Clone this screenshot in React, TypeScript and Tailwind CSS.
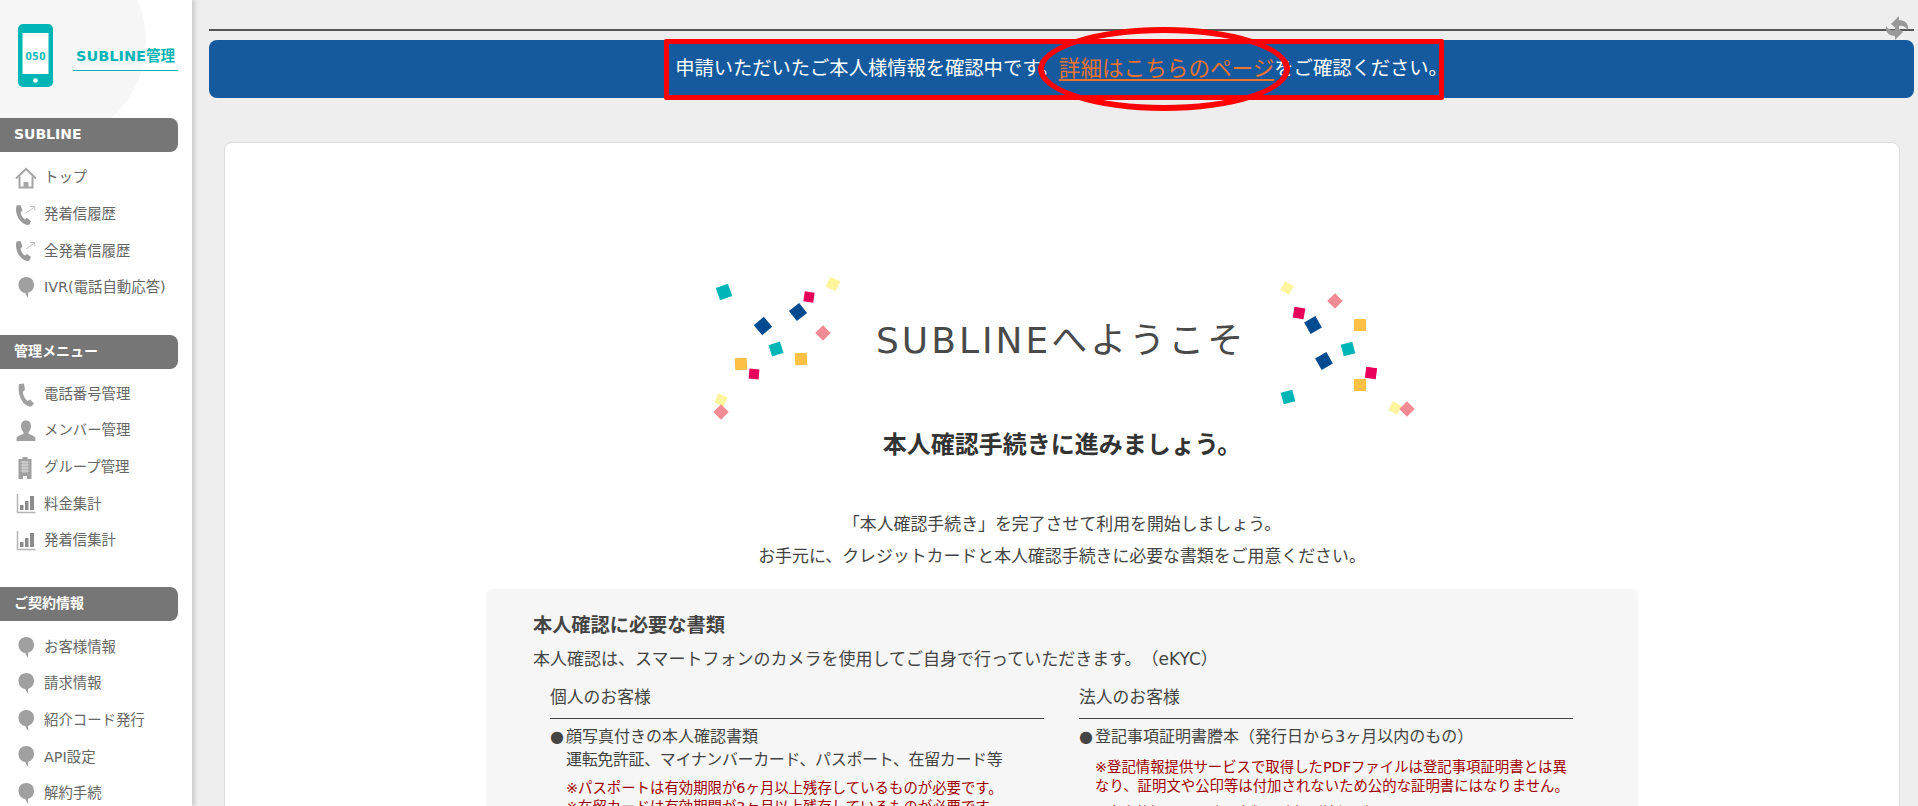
import type { ReactNode } from "react";

const FONT = "font-['DejaVu_Sans','Noto_Sans_CJK_JP',sans-serif]";

function Home() {
  return (
    <svg width="24" height="22" viewBox="0 0 24 22" fill="none" stroke="#a6a6a6" strokeWidth="2">
      <path d="M2 11.500 12 2 22 11.500" />
      <path d="M5.500 9.500V20.500H18.500V9.500" />
      <path d="M9.500 21v-6h5v6Z" fill="#a6a6a6" stroke="none" />
    </svg>
  );
}
function PhoneArrow() {
  return (
    <svg width="24" height="22" viewBox="0 0 24 22" fill="none">
      <path d="M2.500 1.500 6.500 1 8.500 6.500 6.500 8.500C7 11.500 8.500 14 11 15.500L13 14 17 17 15.500 20.500C13 21.500 10 20.500 7 17.500 3.500 14 1 8 2.500 1.500Z" fill="#9a9a9a" />
      <path d="M12 9 20.500 3M16 2.500H20.800V6.500" stroke="#c0c0c0" strokeWidth="1" />
    </svg>
  );
}
function Bubble() {
  return (
    <svg width="24" height="24" viewBox="0 0 24 24">
      <path d="M12.500 1C6.800 1 4.500 5 4.500 9c0 4.500 3.200 7.500 6.700 8 .9 1.800 1.800 3.700 3.300 5-.7-2.200-.6-3.800-.3-5.200C17.500 15.800 20 13 20 9 20 4.800 17.500 1 12.500 1Z" fill="#a0a0a0" />
    </svg>
  );
}
function Phone() {
  return (
    <svg width="24" height="24" viewBox="0 0 24 24">
      <path d="M5 1 10 .5 11 7 8.800 8.800C9 12 10.500 15.500 13.500 18L16 16.500 20 20.500 17.500 23.500C9 24 3 12 5 1Z" fill="#a0a0a0" />
    </svg>
  );
}
function Person() {
  return (
    <svg width="24" height="22" viewBox="0 0 24 22">
      <path d="M12 .5c3 0 5 2.200 5 5.500 0 2.500-1 5-2.500 6.200v1.500c3 1.200 7 2.300 7 5V21h-19v-2.300c0-2.700 4-3.800 7-5v-1.500C8 11 7 8.500 7 6c0-3.300 2-5.500 5-5.500Z" fill="#a0a0a0" />
    </svg>
  );
}
function Building() {
  return (
    <svg width="24" height="22" viewBox="0 0 24 22">
      <path d="M8.500 0h5v2H17.500v20h-4.500v-3H9v3H4.500V2h4Z" fill="#a0a0a0" />
      <path d="M6.500 5h9M6.500 8h9M6.500 11h9M6.500 14h9M9 4v12M11 4v12M13 4v12" stroke="#e6e6e6" strokeWidth=".7" />
    </svg>
  );
}
function Chart() {
  return (
    <svg width="24" height="22" viewBox="0 0 24 22" fill="none">
      <path d="M3.500 1v18.500H21.500" stroke="#b5b5b5" strokeWidth="1.500" />
      <path d="M6 12h3.500v5H6ZM11 8h3.500v9H11ZM16 3h4v14h-4Z" fill="#8c8c8c" />
    </svg>
  );
}

const sections = [
  { title: "SUBLINE", mt: "mt-[31px]", ul: "mt-[8px]", items: [
    [<Home />, "トップ"], [<PhoneArrow />, "発着信履歴"], [<PhoneArrow />, "全発着信履歴"], [<Bubble />, "IVR(電話自動応答)"],
  ] },
  { title: "管理メニュー", mt: "mt-[29px]", ul: "mt-[7px]", items: [
    [<Phone />, "電話番号管理"], [<Person />, "メンバー管理"], [<Building />, "グループ管理"], [<Chart />, "料金集計"], [<Chart />, "発着信集計"],
  ] },
  { title: "ご契約情報", mt: "mt-[28px]", ul: "mt-[8px]", items: [
    [<Bubble />, "お客様情報"], [<Bubble />, "請求情報"], [<Bubble />, "紹介コード発行"], [<Bubble />, "API設定"], [<Bubble />, "解約手続"],
  ] },
] as const;

function Sidebar() {
  return (
    <aside className="relative w-[192px] shrink-0 h-full bg-white shadow-[3px_0_4px_rgba(0,0,0,0.15)] overflow-hidden z-10">
      <div className="absolute left-[-60px] top-[-62px] w-[206px] h-[206px] rounded-full bg-[#f7f7f7]" />
      <div className="relative flex items-start h-[87px] pt-[24px] pl-[18px]">
        <svg width="35" height="63" viewBox="0 0 35 63">
          <rect width="35" height="63" rx="5" fill="#00b5b5" />
          <rect x="4.500" y="9" width="26" height="41" fill="#fff" />
          <circle cx="17.500" cy="56.500" r="2.300" fill="#fff" />
          <text x="17.800" y="35.500" textAnchor="middle" fontSize="11" fontWeight="700" fill="#00b5b5" fontFamily="Noto Sans" letterSpacing=".6">050</text>
        </svg>
        <div className="ml-[20px] mt-[20px] w-[105px] h-[27px] border-b border-[#00b5b5] text-center text-[14.500px] leading-[25px] font-bold text-[#00b5b5] whitespace-nowrap">SUBLINE管理</div>
      </div>
      <div className="relative">
        {sections.map((s) => (
          <section key={s.title} className={s.mt}>
            <h2 className="w-[178px] h-[34px] rounded-r-[8px] bg-[#767676] pl-[14px] text-[14px] leading-[32px] font-bold text-white">{s.title}</h2>
            <ul className={s.ul}>
              {s.items.map(([icon, label], i) => (
                <li key={i} className="flex items-center h-[36.600px] pl-[14px] gap-[6px] text-[14.400px] text-[#666] whitespace-nowrap">
                  <span className="w-[24px] flex justify-center">{icon}</span>
                  <span>{label}</span>
                </li>
              ))}
            </ul>
          </section>
        ))}
      </div>
    </aside>
  );
}

const confettiLeft = [
  [34,32,13,"#00b5b5",-20],[143,24,11,"#fff59d",25],[119,37,10,"#e9005a",8],[108,52,13,"#004a8f",-38],[73,66,13,"#004a8f",-40],
  [133,73,11,"#f28b93",45],[86,89,12,"#00b5b5",-18],[51,104,12,"#ffc043",-3],[111,99,12,"#ffc043",-3],[64,114,10,"#e9005a",5],
  [31,140,10,"#fff59d",25],[31,152,11,"#f28b93",45],
] as const;
const confettiRight = [
  [47,28,10,"#fff59d",30],[95,41,11,"#f28b93",45],[59,53,11,"#e9005a",10],[73,65,13,"#004a8f",-30],[120,65,12,"#ffc043",0],
  [108,89,12,"#00b5b5",-15],[84,101,13,"#004a8f",-30],[131,113,11,"#e9005a",8],[120,125,12,"#ffc043",0],[48,137,12,"#00b5b5",-15],
  [155,148,10,"#fff59d",30],[167,149,11,"#f28b93",45],
] as const;

function Confetti({ items, width }: { items: readonly (readonly [number, number, number, string, number])[]; width: number }) {
  return (
    <svg width={width} height="168" viewBox={`0 0 ${width} 168`} className="shrink-0">
      {items.map(([x, y, s, c, r], i) => (
        <rect key={i} x={x - s / 2} y={y - s / 2} width={s} height={s} fill={c} transform={`rotate(${r} ${x} ${y})`} />
      ))}
    </svg>
  );
}

function Bullet({ children }: { children: ReactNode }) {
  return (
    <p className="flex text-[16px] leading-[23px] mt-[6px]">
      <span className="w-[16px] shrink-0">●</span>
      <span>{children}</span>
    </p>
  );
}

function Note({ children, className = "" }: { children: ReactNode; className?: string }) {
  return <p className={`ml-[16px] text-[14.400px] leading-[19px] text-[#a00000] ${className}`}>{children}</p>;
}

function ColumnTitle({ children }: { children: string }) {
  return <h4 className="text-[16.800px] leading-[28px] pb-[7px] border-b border-[#444]">{children}</h4>;
}

export default function App() {
  return (
    <div className={`${FONT} relative flex w-[1918px] h-[806px] overflow-hidden bg-[#eeeeee] text-[#444] [text-spacing-trim:space-all]`}>
      <Sidebar />
      <main className="flex-1 min-w-0 pl-[17px] pr-[4px]">
        <div className="mt-[29px] h-[2px] bg-[#555]" />
        <div className="mt-[9px] h-[58px] rounded-[8px] bg-[#155a9e] flex items-center justify-center text-[19.300px] text-white whitespace-nowrap">
          <span>申請いただいたご本人様情報を確認中です。</span>
          <a className="text-[21.600px] text-[#f0722b] underline underline-offset-[3px]">詳細はこちらのページ</a>
          <span>をご確認ください。</span>
        </div>
        <div className="mt-[44px] ml-[15px] mr-[14px] h-[800px] bg-white border border-[#dcdcdc] rounded-[8px] pt-[117px]">
          <div className="flex items-start ml-[465px] w-[750px]">
            <Confetti items={confettiLeft} width={180} />
            <h1 className="ml-[6px] w-[364px] mt-[61px] text-[36px] leading-[40px] tracking-[3px] text-[#4a4a4a] whitespace-nowrap">SUBLINEへようこそ</h1>
            <Confetti items={confettiRight} width={200} />
          </div>
          <h2 className="mt-[1px] text-center text-[24px] leading-[32px] font-bold text-[#333]">本人確認手続きに進みましょう。</h2>
          <div className="mt-[47px] text-center text-[16.900px] leading-[32px]">
            <p>「本人確認手続き」を完了させて利用を開始しましょう。</p>
            <p>お手元に、クレジットカードと本人確認手続きに必要な書類をご用意ください。</p>
          </div>
          <div className="mx-auto mt-[17px] w-[1152px] h-[300px] rounded-[6px] bg-[#f6f6f6] pl-[47px] pt-[24px]">
            <h3 className="text-[19.200px] leading-[26px] font-bold">本人確認に必要な書類</h3>
            <p className="mt-[6px] text-[17px] leading-[28px]">本人確認は、スマートフォンのカメラを使用してご自身で行っていただきます。（eKYC）</p>
            <div className="mt-[10px] ml-[17px] flex gap-[35px]">
              <div className="w-[494px]">
                <ColumnTitle>個人のお客様</ColumnTitle>
                <Bullet>顔写真付きの本人確認書類<br /><span className="tracking-[-0.37px]">運転免許証、マイナンバーカード、パスポート、在留カード等</span></Bullet>
                <div className="mt-[8px]">
                  <Note>※パスポートは有効期限が6ヶ月以上残存しているものが必要です。</Note>
                  <Note>※在留カードは有効期間が3ヶ月以上残存しているものが必要です。</Note>
                </div>
              </div>
              <div className="w-[494px]">
                <ColumnTitle>法人のお客様</ColumnTitle>
                <Bullet>登記事項証明書謄本（発行日から3ヶ月以内のもの）</Bullet>
                <div className="mt-[10px]">
                  <Note>※登記情報提供サービスで取得したPDFファイルは登記事項証明書とは異なり、証明文や公印等は付加されないため公的な証明書にはなりません。</Note>
                  <Note className="mt-[8px]">※審査状況により確認書類を追加（法規則）</Note>
                </div>
              </div>
            </div>
          </div>
        </div>
      </main>

      <div className="absolute left-[664px] top-[39px] w-[780px] h-[61px] border-[5px] border-[#ff0000] rounded-[2px]" />
      <div className="absolute left-[1038px] top-[27px] w-[252px] h-[84px] border-[6px] border-[#ff0000] rounded-[50%]" />
      <svg className="absolute left-[1885px] top-[15px]" width="24" height="26" viewBox="0 0 24 26" fill="#999999">
        <path d="M6 9 14 1v4c6 0 10 4 9 10-3-4-6-5-9-4v5Z" />
        <path d="M6 9 14 1v4c6 0 10 4 9 10-3-4-6-5-9-4v5Z" transform="rotate(180 12 13)" />
      </svg>
    </div>
  );
}
